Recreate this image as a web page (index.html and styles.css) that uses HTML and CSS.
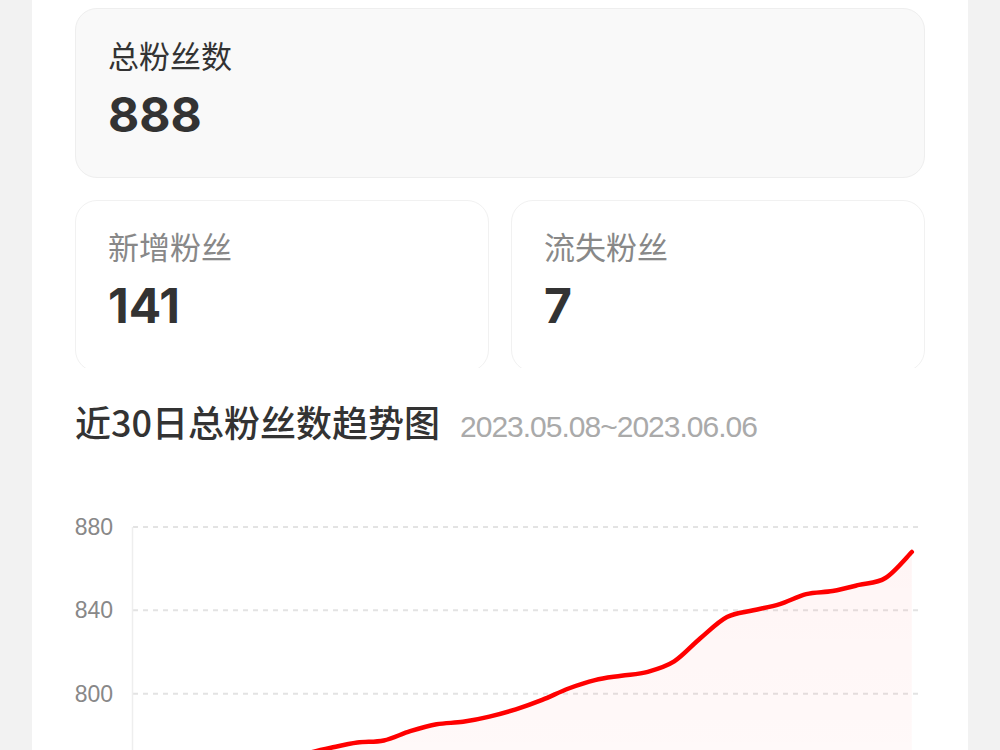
FILE: index.html
```html
<!DOCTYPE html>
<html lang="zh-CN">
<head>
    <meta charset="UTF-8">
    <meta name="viewport" content="width=device-width, initial-scale=1.0">
    <title>粉丝数据</title>
    <link rel="stylesheet" href="styles.css">
</head>
<body>
    <div class="page">
        <div class="total-card">
            <div class="stat-label dark">总粉丝数</div>
            <div class="stat-value">888</div>
        </div>

        <div class="stat-row">
            <div class="stat-card">
                <div class="stat-label">新增粉丝</div>
                <div class="stat-value">141</div>
            </div>
            <div class="stat-card">
                <div class="stat-label">流失粉丝</div>
                <div class="stat-value">7</div>
            </div>
        </div>

        <div class="trend-title">
            <h2>近30日总粉丝数趋势图</h2>
            <span class="trend-range">2023.05.08~2023.06.06</span>
        </div>

        <svg class="trend-chart" width="850" height="250" viewBox="0 0 850 250">
            <defs>
                <linearGradient id="area-fill" x1="0" y1="0" x2="0" y2="1">
                    <stop offset="0" stop-color="#ff0000" stop-opacity="0.04"/>
                    <stop offset="1" stop-color="#ff0000" stop-opacity="0.02"/>
                </linearGradient>
            </defs>
            <g class="grid">
                <line x1="58" y1="27" x2="845" y2="27"/>
                <line x1="58" y1="110.3" x2="845" y2="110.3"/>
                <line x1="58" y1="193.7" x2="845" y2="193.7"/>
            </g>
            <line class="axis" x1="57.5" y1="27" x2="57.5" y2="250"/>
            <g class="y-labels">
                <text x="38" y="27">880</text>
                <text x="38" y="110.3">840</text>
                <text x="38" y="193.7">800</text>
            </g>
            <path id="trend-area" fill="url(#area-fill)"/>
            <path id="trend-line" class="line"/>
        </svg>
    </div>

    <script src="chart.js"></script>
</body>
</html>
```

FILE: styles.css
```css
body {
    margin: 0;
    background-color: #f2f2f2;
    font-family: "Liberation Sans", "Noto Sans CJK SC", sans-serif;
    color: #333333;
}

.page {
    width: 936px;
    height: 100vh;
    margin: 0 auto;
    padding: 8px 43px 0;
    box-sizing: border-box;
    background-color: #ffffff;
    overflow: hidden;
}

.total-card {
    height: 170px;
    padding: 26px 32px;
    box-sizing: border-box;
    background-color: #f9f9f9;
    border: 1px solid #eeeeee;
    border-radius: 22px;
}

/* the small cards are cut off at the bottom edge */
.stat-row {
    display: grid;
    grid-template-columns: 1fr 1fr;
    gap: 22px;
    height: 168px;
    margin-top: 22px;
    overflow: hidden;
}

.stat-card {
    height: 172px;
    padding: 25px 32px;
    box-sizing: border-box;
    background-color: #ffffff;
    border: 1px solid #f1f1f1;
    border-radius: 22px;
}

.stat-label {
    font-family: "Noto Sans CJK SC", sans-serif;
    font-size: 31px;
    line-height: 40px;
    color: #888888;
}

.stat-label.dark {
    color: #333333;
}

.stat-value {
    margin-top: 12px;
    font-family: Inter, "Liberation Sans", sans-serif;
    font-size: 48px;
    font-weight: 700;
    line-height: 56px;
    color: #333333;
}

.trend-title {
    display: flex;
    align-items: baseline;
    gap: 20px;
    margin-top: 28px;
}

.trend-title h2 {
    margin: 0;
    font-family: "Noto Sans CJK SC", sans-serif;
    font-size: 36px;
    font-weight: 500;
    line-height: 50px;
    color: #333333;
}

.trend-range {
    font-size: 30px;
    letter-spacing: -1px;
    color: #aaaaaa;
}

.trend-chart {
    display: block;
    margin-top: 54px;
}

.grid line {
    stroke: #e3e3e3;
    stroke-width: 2;
    stroke-dasharray: 5 5;
}

.axis {
    stroke: #eeeeee;
    stroke-width: 1.5;
}

.y-labels text {
    font-family: "Liberation Sans", sans-serif;
    font-size: 23px;
    fill: #888888;
    text-anchor: end;
    dominant-baseline: central;
}

.line {
    fill: none;
    stroke: #ff0000;
    stroke-width: 4.5;
    stroke-linecap: round;
    stroke-linejoin: round;
}
```

FILE: chart.js
```javascript
// daily follower totals, 05.08 - 06.06
const totals = [742, 748, 753, 758, 763, 767, 771, 774, 776.5, 777.5,
    782, 785.3, 786.5, 789, 792.5, 797, 802.5, 806.5, 808.6, 810.5,
    815.5, 826.7, 836.8, 840, 843, 847.8, 849.3, 852.2, 855.5, 868];

const chartTop = 27;
const chartBottom = 250;
const pxPerUnit = 83.33 / 40;
const startX = 71.2;
const step = 26.4;

const points = totals.map((v, i) => ({
    x: startX + i * step,
    y: chartTop + (880 - v) * pxPerUnit
}));

// catmull-rom through the points, written as cubic beziers
function smoothPath(pts) {
    let d = 'M' + pts[0].x.toFixed(1) + ' ' + pts[0].y.toFixed(1);
    for (let i = 0; i < pts.length - 1; i++) {
        const p0 = pts[i - 1] || pts[i];
        const p1 = pts[i];
        const p2 = pts[i + 1];
        const p3 = pts[i + 2] || p2;
        const c1x = p1.x + (p2.x - p0.x) / 6;
        const c1y = p1.y + (p2.y - p0.y) / 6;
        const c2x = p2.x - (p3.x - p1.x) / 6;
        const c2y = p2.y - (p3.y - p1.y) / 6;
        d += ' C' + c1x.toFixed(1) + ' ' + c1y.toFixed(1) + ' ' +
            c2x.toFixed(1) + ' ' + c2y.toFixed(1) + ' ' +
            p2.x.toFixed(1) + ' ' + p2.y.toFixed(1);
    }
    return d;
}

const linePath = smoothPath(points);
const lastPoint = points[points.length - 1];

document.getElementById('trend-line').setAttribute('d', linePath);
document.getElementById('trend-area').setAttribute('d',
    linePath + ' L' + lastPoint.x.toFixed(1) + ' ' + chartBottom +
    ' L' + points[0].x.toFixed(1) + ' ' + chartBottom + ' Z');
```
